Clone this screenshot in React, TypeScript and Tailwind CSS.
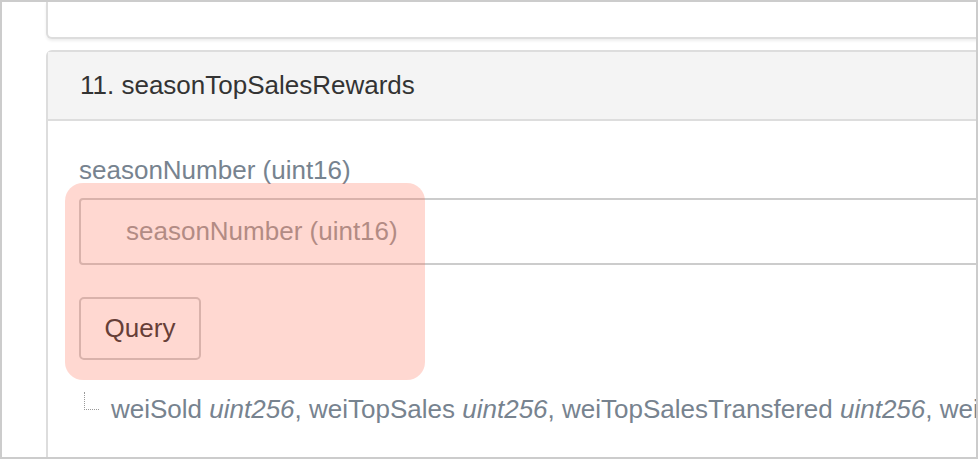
const App = () => {
  return (
    <div className="relative h-[459px] w-[978px] overflow-hidden border-2 border-[#cccccc] bg-white font-['Liberation_Sans',Arial,sans-serif]">
      <div className="ml-[44px] w-[1100px]">
        {/* previous card, only its bottom edge shows */}
        <div className="h-[37px] rounded-b-[6px] border-x-2 border-b-2 border-[#dddddd] bg-white shadow-[0_2px_3px_rgba(0,0,0,0.07)]" />

        <div className="mt-[11px] rounded-t-[6px] border-2 border-[#dddddd] bg-white">
          <div className="flex h-[69px] items-center border-b-2 border-[#dddddd] bg-[#f4f4f4] pl-[32px] text-[26px] text-[#333333]">
            11. seasonTopSalesRewards
          </div>

          <div className="pl-[31px] pt-[34px]">
            <div className="h-[30px] text-[26px] leading-[30px] text-[#77838f]">
              seasonNumber (uint16)
            </div>
            <input
              className="mt-[13px] block h-[67px] w-[1060px] rounded-[4px] border-2 border-[#cccccc] bg-transparent pl-[45px] text-[26px] text-[#333333] placeholder:text-[#999999]"
              placeholder="seasonNumber (uint16)"
            />
            <button className="mt-[32px] block h-[63px] w-[122px] rounded-[5px] border-2 border-[#cccccc] bg-white text-[26px] text-[#333333]">
              Query
            </button>
            <div className="mt-[34px] flex items-start text-[26px] leading-[30px] text-[#77838f]">
              <div className="ml-[5px] mt-[-2px] h-[18px] w-[15px] shrink-0 border-b border-l border-dotted border-[#999999]" />
              <div className="ml-[12px] whitespace-nowrap">
                weiSold <i>uint256</i>, weiTopSales <i>uint256</i>,
                weiTopSalesTransfered <i>uint256</i>, weiTopSalesRewarded{" "}
                <i>uint256</i>
              </div>
            </div>
            <div className="h-[60px]" />
          </div>
        </div>
      </div>

      {/* highlight over the form */}
      <div className="absolute left-[63px] top-[181px] h-[197px] w-[360px] rounded-[18px] bg-[rgba(255,99,71,0.25)]" />
    </div>
  );
};

export default App;
